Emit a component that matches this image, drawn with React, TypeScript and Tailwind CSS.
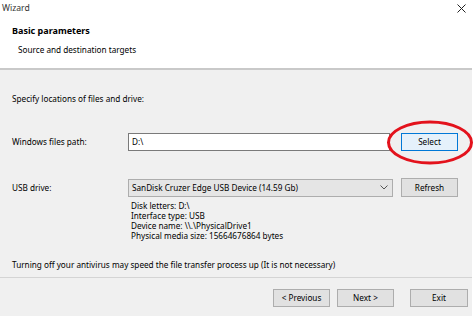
export default function App() {
  return (
    <div
      className="relative w-[474px] h-[316px] overflow-hidden bg-white text-[8.2px] leading-[10px] text-[#000]"
      style={{ fontFamily: '"Noto Sans", "Open Sans", sans-serif' }}
    >
      <div className="w-[472px] h-full flex flex-col">
        {/* title bar */}
        <div className="h-[15px] flex items-center justify-between pl-[2px] pr-[6px] text-[#333]">
          <span className="text-[8.6px]">Wizard</span>
          <svg width="9" height="9" viewBox="0 0 9 9" className="mt-[1px]">
            <path d="M0.5 0.5 L8.5 8.5 M8.5 0.5 L0.5 8.5" stroke="#222" strokeWidth="1" />
          </svg>
        </div>

        {/* header */}
        <div className="h-[53px] pl-[12px] pt-[11px]">
          <div className="font-bold text-[9px]">Basic parameters</div>
          <div className="pl-[6px] mt-[9px]">Source and destination targets</div>
        </div>
        <div className="h-[2px] bg-[#c9c9c9]" />

        {/* body */}
        <div className="flex-1 bg-[#f0f0f0] flex flex-col">
          <div className="h-[207px] px-[12px] pt-[24px]">
            <div>Specify locations of files and drive:</div>

            <div className="mt-[29px] flex items-center">
              <span className="w-[116px]">Windows files path:</span>
              <div className="w-[262px] h-[18px] bg-white border border-[#7a7a7a] flex items-center px-[3px]">
                D:\
              </div>
              <button className="ml-[11px] w-[57px] h-[18px] bg-[#e5f1fb] border border-[#0078d7] flex items-center justify-center">
                Select
              </button>
            </div>

            <div className="mt-[27px] flex items-center">
              <span className="w-[116px]">USB drive:</span>
              <div className="w-[265px] h-[18px] bg-[#e5e5e5] border border-[#adadad] flex items-center justify-between px-[3px]">
                <span>SanDisk Cruzer Edge USB Device (14.59 Gb)</span>
                <svg width="8" height="5" viewBox="0 0 8 5" className="mr-[1px]">
                  <path d="M0.5 0.5 L4 4 L7.5 0.5" stroke="#555" strokeWidth="1" fill="none" />
                </svg>
              </div>
              <button className="ml-[8px] w-[57px] h-[19px] bg-[#e1e1e1] border border-[#adadad] flex items-center justify-center">
                Refresh
              </button>
            </div>

            <div className="ml-[119px] mt-[4px] flex flex-col">
              <span>Disk letters: D:\</span>
              <span>Interface type: USB</span>
              <span>Device name: \\.\PhysicalDrive1</span>
              <span>Physical media size: 15664676864 bytes</span>
            </div>

            <div className="mt-[19px]">
              Turning off your antivirus may speed the file transfer process up (It is not necessary)
            </div>
          </div>

          <div className="h-px bg-[#d4d4d4]" />

          <div className="flex items-start pt-[11px] pl-[273px]">
            <button className="w-[57px] h-[18px] bg-[#e1e1e1] border border-[#adadad] flex items-center justify-center">
              &lt; Previous
            </button>
            <button className="ml-[7px] w-[57px] h-[18px] bg-[#e1e1e1] border border-[#adadad] flex items-center justify-center">
              Next &gt;
            </button>
            <button className="ml-[16px] w-[58px] h-[18px] bg-[#e1e1e1] border border-[#adadad] flex items-center justify-center">
              Exit
            </button>
          </div>
        </div>
      </div>

      {/* red highlight around Select */}
      <svg
        className="absolute left-[386px] top-[119px]"
        width="88"
        height="47"
        viewBox="0 0 88 47"
      >
        <ellipse cx="44" cy="23.5" rx="41.5" ry="20.5" fill="none" stroke="#e3121c" strokeWidth="3" />
      </svg>
    </div>
  );
}
